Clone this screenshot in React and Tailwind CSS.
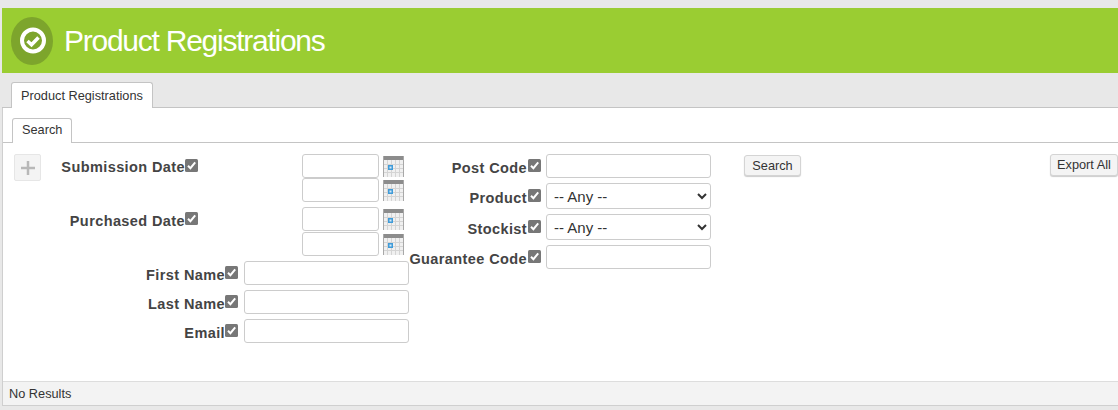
const FONT = "font-['Liberation_Sans',Arial,sans-serif]";

function CheckBox({ className }) {
  return (
    <svg width="13" height="13" viewBox="0 0 13 13" className={`shrink-0 ${className || ''}`}>
      <rect width="13" height="13" rx="1.5" fill="#777777" />
      <path d="M3 6.8 L5.4 9.2 L10.2 3.4" fill="none" stroke="#ffffff" strokeWidth="2" />
    </svg>
  );
}

function CalendarIcon() {
  return (
    <svg width="21" height="21" viewBox="0 0 21 21" className="shrink-0 ml-1">
      <rect width="21" height="21" fill="#f0f0f0" />
      <path d="M0 8.5H21M0 12.5H21M0 16.5H21M4.500 4V21M8.500 4V21M12.500 4V21M16.500 4V21" stroke="#d4d4d4" strokeWidth="1" />
      <rect width="21" height="4" fill="#8c8c8c" />
      <rect x="0" y="0" width="1" height="21" fill="#a8a8a8" />
      <rect x="20" y="0" width="1" height="21" fill="#a8a8a8" />
      <rect x="5" y="9" width="5" height="5" fill="#3f9bd8" />
      <rect x="6.500" y="10.500" width="2" height="2" fill="#d5e9f7" />
    </svg>
  );
}

function TextInput({ className }) {
  return <input type="text" className={`h-6 border border-[#cccccc] rounded-[3px] bg-white ${className}`} />;
}

function DateGroup({ label, labelTop, boxClass, rowGap }) {
  return (
    <div className="flex">
      <div className={`flex justify-end items-start w-[184px] ${labelTop}`}>
        <span className="text-[14.5px] font-bold text-[#444444] tracking-[0.4px] leading-[16px]">{label}</span>
        <CheckBox className={boxClass} />
      </div>
      <div className={`flex flex-col ml-[104px] ${rowGap}`}>
        <div className="flex items-center h-6">
          <TextInput className="w-[77px]" />
          <CalendarIcon />
        </div>
        <div className="flex items-center h-6">
          <TextInput className="w-[77px]" />
          <CalendarIcon />
        </div>
      </div>
    </div>
  );
}

function NameRow({ label }) {
  return (
    <div className="flex justify-end items-start h-6">
      <span className="text-[14.5px] font-bold text-[#444444] tracking-[0.4px] leading-[16px] mt-[6px]">{label}</span>
      <span className="mt-[5px]"><CheckBox /></span>
      <TextInput className="w-[165px] ml-[6px]" />
    </div>
  );
}

function FieldRow({ label, children, className, labelTop, boxTop }) {
  return (
    <div className={`flex justify-end items-start ${className}`}>
      <span className={`text-[14.5px] font-bold text-[#444444] tracking-[0.4px] leading-[16px] ${labelTop}`}>{label}</span>
      <span className={`ml-px ${boxTop}`}><CheckBox /></span>
      <div className="ml-[5px]">{children}</div>
    </div>
  );
}

function AnySelect() {
  return (
    <select className="w-[165px] h-[26px] border border-[#cccccc] rounded-[3px] bg-white text-[15px] text-[#333333] pl-[3px]">
      <option>-- Any --</option>
    </select>
  );
}

export default function App() {
  return (
    <div className={`${FONT} h-[410px] w-[1118px] overflow-hidden bg-[#e8e8e8] pt-2 pl-[2px]`}>
      <div className="flex items-center h-[65px] bg-[#9acd32] pl-[9px]">
        <svg width="42" height="48" viewBox="0 0 42 48" className="shrink-0">
          <ellipse cx="21" cy="24" rx="21" ry="24" fill="#7da52c" />
          <circle cx="22" cy="23.500" r="11" fill="none" stroke="#ffffff" strokeWidth="4" />
          <path d="M16.500 24 L20.500 27.800 L27.500 20.500" fill="none" stroke="#ffffff" strokeWidth="3.500" />
        </svg>
        <h1 className="ml-[11px] text-[30px] text-white tracking-[-1.25px] leading-none">Product Registrations</h1>
      </div>

      <div className="h-[35px] flex items-end pl-[9px] border-b border-[#c4c4c4]">
        <div className="h-[26px] -mb-px px-[9px] flex items-center bg-white border border-b-0 border-[#c4c4c4] rounded-t-[3px] text-[12.75px] text-[#333333]">
          Product Registrations
        </div>
      </div>

      <div className="h-[298px] flex flex-col bg-white border-l border-[#cfcfcf]">
        <div className="h-[35px] flex items-end pl-[9px] border-b border-[#c4c4c4]">
          <div className="h-[25px] -mb-px px-[9px] pb-[2px] flex items-center bg-white border border-b-0 border-[#c4c4c4] rounded-t-[3px] text-[12.75px] text-[#333333]">
            Search
          </div>
        </div>

        <div className="flex-1 flex items-start pt-[11px] pl-[11px]">
          <div className="w-[395px] flex flex-col">
            <div className="flex">
              <button className="w-[27px] h-[27px] flex items-center justify-center bg-[#f4f4f4] border border-[#e6e6e6] rounded-[2px]">
                <svg width="14" height="14" viewBox="0 0 14 14">
                  <path d="M7 0V14M0 7H14" stroke="#b8b8b8" strokeWidth="2.500" />
                </svg>
              </button>
              <div className="flex flex-col ml-[-27px]">
                <div className="mb-[5px]">
                  <DateGroup label="Submission Date" labelTop="mt-[5px]" />
                </div>
                <DateGroup label="Purchased Date" labelTop="mt-[6px]" boxClass="-mt-px" rowGap="gap-px" />
              </div>
            </div>
            <div className="flex flex-col gap-[5px] mt-[5px]">
              <NameRow label="First Name" />
              <NameRow label="Last Name" />
              <NameRow label="Email" />
            </div>
          </div>

          <div className="w-[302px] flex flex-col">
            <FieldRow label="Post Code" className="h-[29px]" labelTop="mt-[6px]" boxTop="mt-[5px]">
              <TextInput className="w-[165px]" />
            </FieldRow>
            <FieldRow label="Product" className="h-[31px]" labelTop="mt-[7px]" boxTop="mt-[6px]">
              <AnySelect />
            </FieldRow>
            <FieldRow label="Stockist" className="h-[31px]" labelTop="mt-[7px]" boxTop="mt-[6px]">
              <AnySelect />
            </FieldRow>
            <FieldRow label="Guarantee Code" className="h-6" labelTop="mt-[6px]" boxTop="mt-[5px]">
              <TextInput className="w-[165px]" />
            </FieldRow>
          </div>

          <button className="ml-[33px] mt-px h-[21px] w-[57px] bg-[#f4f4f4] border border-[#d4d4d4] rounded-[3px] shadow-[0_1px_1px_#cccccc] text-[12.75px] text-[#333333]">
            Search
          </button>
          <button className="ml-auto h-[22px] w-[68px] bg-[#f4f4f4] border border-[#d4d4d4] rounded-[3px] shadow-[0_1px_1px_#cccccc] text-[12.75px] text-[#333333]">
            Export All
          </button>
        </div>

        <div className="h-[25px] flex items-center pl-[6px] bg-[#f3f3f3] border-t border-[#dddddd] border-b border-b-[#cfcfcf] text-[12.75px] text-[#333333]">
          No Results
        </div>
      </div>
    </div>
  );
}
